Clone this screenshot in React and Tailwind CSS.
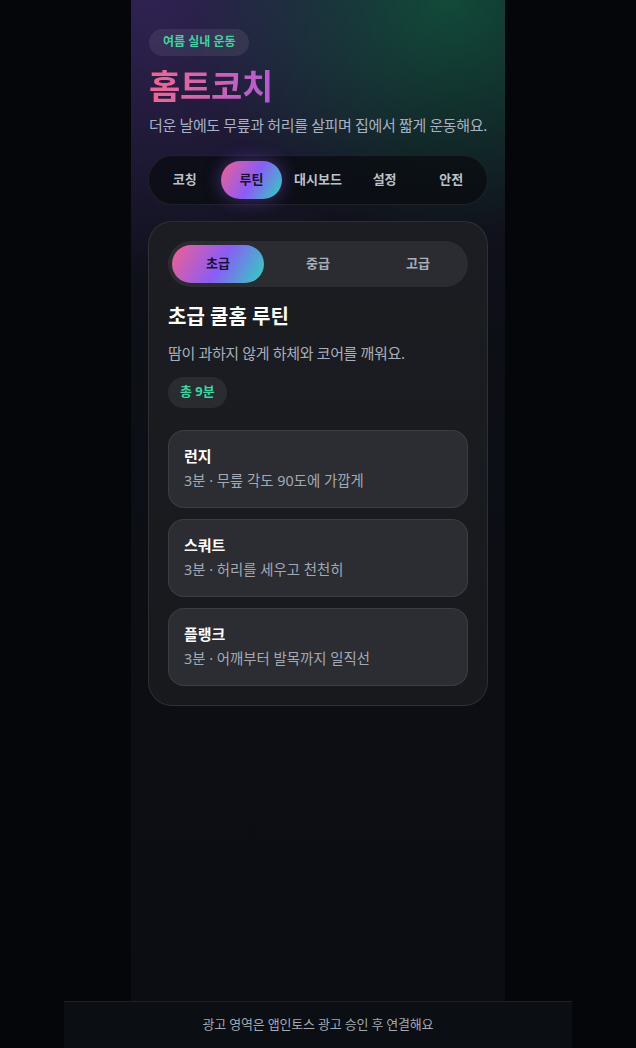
import React from "react";

const grad = "bg-[linear-gradient(120deg,#f2608f_0%,#8b5cf6_52%,#2dd4bf_100%)]";

const exercises = [
  { name: "런지", desc: "3분 · 무릎 각도 90도에 가깝게" },
  { name: "스쿼트", desc: "3분 · 허리를 세우고 천천히" },
  { name: "플랭크", desc: "3분 · 어깨부터 발목까지 일직선" },
];

const tabs = ["코칭", "루틴", "대시보드", "설정", "안전"];
const levels = ["초급", "중급", "고급"];

export default function App() {
  return (
    <div
      className="h-screen w-full bg-[#05060a] flex flex-col items-center overflow-hidden"
      style={{ fontFamily: '"Noto Sans", "Noto Sans CJK KR", sans-serif' }}
    >
      <div className="w-[374px] flex-1 bg-[radial-gradient(ellipse_260px_240px_at_85%_0%,rgba(16,92,62,0.75),transparent),radial-gradient(ellipse_320px_280px_at_5%_0%,rgba(58,40,100,0.7),transparent),linear-gradient(180deg,#151426_0%,#0d0f16_35%,#0b0d12_100%)] px-[17px] pt-[28px]">
        <div className="inline-flex h-[27px] items-center rounded-full bg-white/[0.08] px-[14px] text-[12px] font-bold text-[#34d9a0] ml-[1px]">
          여름 실내 운동
        </div>
        <h1 className="mt-[9px] text-[34px] font-bold leading-[42px] tracking-[-0.3px] bg-gradient-to-r from-[#f2648e] to-[#b25ad2] bg-clip-text text-transparent w-fit ml-[1px]">
          홈트코치
        </h1>
        <p className="mt-[7px] whitespace-nowrap text-[15px] leading-[22px] text-[#a7b1c2] ml-[1px] tracking-[-0.35px]">
          더운 날에도 무릎과 허리를 살피며 집에서 짧게 운동해요.
        </p>

        <nav className="mt-[19px] grid grid-cols-5 gap-[5px] rounded-full border border-white/[0.08] bg-[#0a0c11]/80 p-[5px] h-[50px]">
          {tabs.map((t) => (
            <div
              key={t}
              className={
                t === "루틴"
                  ? `${grad} flex items-center justify-center rounded-full text-[13px] font-bold text-[#1a1230] shadow-[0_0_18px_rgba(139,92,246,0.45)]`
                  : "flex items-center justify-center rounded-full text-[13px] font-bold text-[#bcc2cc]"
              }
            >
              {t}
            </div>
          ))}
        </nav>

        <section className="mt-[16px] rounded-[24px] border border-white/[0.09] bg-[linear-gradient(180deg,#1b1d22_0%,#17191d_100%)] p-[19px]">
          <div className="grid grid-cols-3 gap-[8px] rounded-full bg-[#2a2c31] p-[4px] h-[46px]">
            {levels.map((l) => (
              <div
                key={l}
                className={
                  l === "초급"
                    ? `${grad} flex items-center justify-center rounded-full text-[13px] font-bold text-[#1a1230]`
                    : "flex items-center justify-center rounded-full text-[13px] font-bold text-[#a9afba]"
                }
              >
                {l}
              </div>
            ))}
          </div>

          <h2 className="mt-[17px] text-[20px] font-bold leading-[26px] text-white">
            초급 쿨홈 루틴
          </h2>
          <p className="mt-[12px] text-[15px] leading-[22px] text-[#a9afba] tracking-[-0.35px]">
            땀이 과하지 않게 하체와 코어를 깨워요.
          </p>
          <div className="mt-[13px] inline-flex h-[31px] items-center rounded-full bg-white/[0.07] px-3 text-[13px] font-bold text-[#34d9a0]">
            총 9분
          </div>

          <div className="mt-[22px] flex flex-col gap-[11px]">
            {exercises.map((e) => (
              <div
                key={e.name}
                className="h-[78px] rounded-[16px] border border-white/[0.08] bg-[#2c2d32] px-[15px] pt-[14px]"
              >
                <div className="text-[15px] font-bold leading-[22px] text-white">{e.name}</div>
                <div className="mt-[4px] text-[14.4px] leading-[20px] text-[#a3a9b4]">{e.desc}</div>
              </div>
            ))}
          </div>
        </section>
      </div>

      <footer className="w-[508px] h-[47px] shrink-0 border-t border-[#1c2027] bg-[#0b0e13] flex items-center justify-center text-[13px] tracking-[-0.2px] text-[#a2a9b3]">
        광고 영역은 앱인토스 광고 승인 후 연결해요
      </footer>
    </div>
  );
}
